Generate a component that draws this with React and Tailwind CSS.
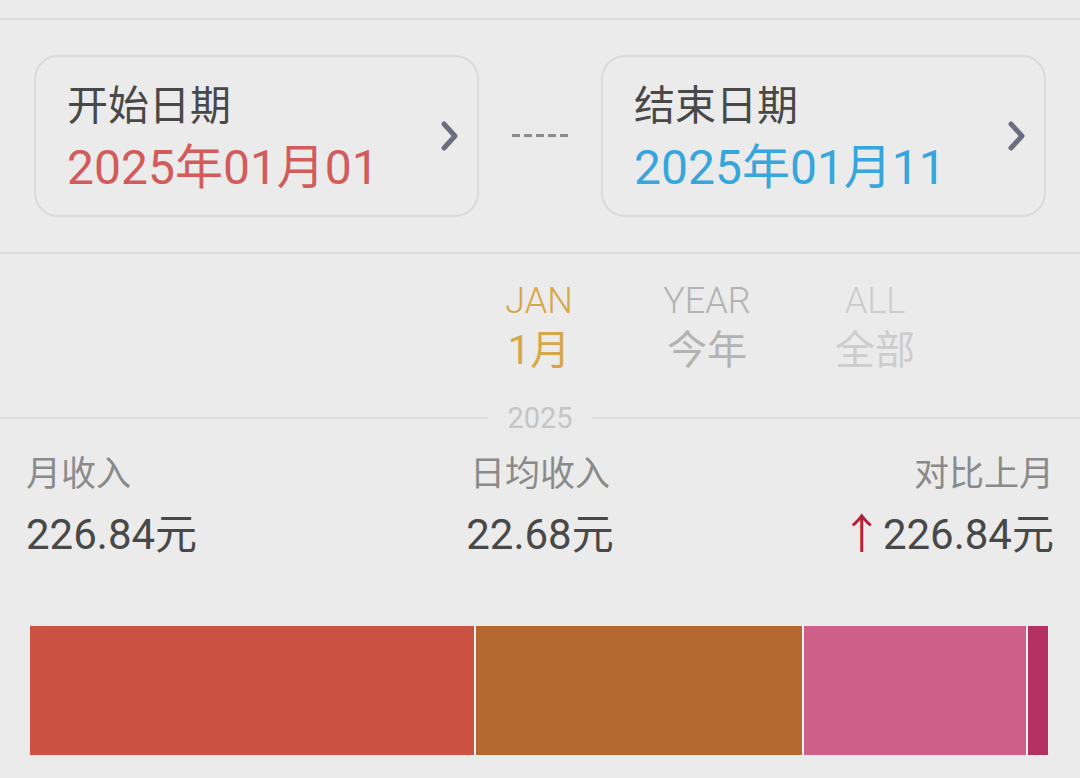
import React from 'react';

const font = { fontFamily: 'Roboto, "Noto Sans CJK SC", sans-serif' };

const Chevron = () => (
  <svg width="22" height="32" viewBox="0 0 22 32" fill="none">
    <path d="M5 4 L16 16 L5 28" stroke="#6a6e7e" strokeWidth="5" strokeLinecap="round" strokeLinejoin="round" />
  </svg>
);

const Dashes = () => (
  <svg width="56" height="4" viewBox="0 0 56 4">
    {[0, 1, 2, 3, 4].map((i) => (
      <rect key={i} x={i * 12} y="0" width="8" height="3" fill="#8c8c8c" />
    ))}
  </svg>
);

const DateCard = ({ label, value, valueClass }) => (
  <div className="w-[445px] h-[162px] rounded-[24px] border-2 border-[#dadada] flex items-center pl-[31px] pr-[16px]">
    <div className="flex-1 pt-[6px]">
      <div className="text-[41px] leading-[48px] text-[#484848]">{label}</div>
      <div className={`text-[48px] leading-[56px] mt-[10px] ${valueClass}`}>{value}</div>
    </div>
    <Chevron />
  </div>
);

const tabs = [
  { en: 'JAN', zh: '1月', en_c: 'text-[#d6a64a]', zh_c: 'text-[#d6a64a]' },
  { en: 'YEAR', zh: '今年', en_c: 'text-[#b3b3b3]', zh_c: 'text-[#b3b3b3]' },
  { en: 'ALL', zh: '全部', en_c: 'text-[#cdcdcd]', zh_c: 'text-[#cdcdcd]' },
];

const segments = [
  { w: 'w-[444px]', c: 'bg-[#cb5142]' },
  { w: 'w-[326px]', c: 'bg-[#b4672e]' },
  { w: 'w-[222px]', c: 'bg-[#cd5f88]' },
  { w: 'w-[20px]', c: 'bg-[#b42f62]' },
];

export default function App() {
  return (
    <div className="min-h-screen bg-[#ebebeb] overflow-hidden" style={font}>
      <div className="h-[18px]" />

      {/* date range */}
      <div className="border-y-2 border-[#dcdcdc] flex items-center pl-[34px] pr-[34px] pt-[35px] pb-[35px]">
        <DateCard label="开始日期" value="2025年01月01" valueClass="text-[#d25b5b]" />
        <div className="flex-1 flex justify-center">
          <Dashes />
        </div>
        <DateCard label="结束日期" value="2025年01月11" valueClass="text-[#36a6dd]" />
      </div>

      {/* period tabs */}
      <div className="flex pl-[455px] pt-[27px]">
        {tabs.map((t) => (
          <div key={t.en} className="w-[168px] flex flex-col items-center">
            <div className={`text-[36px] leading-[40px] font-light ${t.en_c}`}>{t.en}</div>
            <div className={`text-[40px] leading-[48px] mt-[6px] ${t.zh_c}`}>{t.zh}</div>
          </div>
        ))}
      </div>

      {/* year divider */}
      <div className="flex items-center mt-[26px]">
        <div className="flex-1 border-t-2 border-[#dedede]" />
        <div className="px-[19px] text-[29px] leading-[34px] text-[#c5c5c5]">2025</div>
        <div className="flex-1 border-t-2 border-[#dedede]" />
      </div>

      {/* summary */}
      <div className="grid grid-cols-3 px-[26px] mt-[20px]">
        <div>
          <div className="text-[35px] leading-[40px] text-[#8a8a8a]">月收入</div>
          <div className="text-[42px] leading-[48px] mt-[16px] text-[#484848]">226.84元</div>
        </div>
        <div className="text-center">
          <div className="text-[35px] leading-[40px] text-[#8a8a8a]">日均收入</div>
          <div className="text-[42px] leading-[48px] mt-[16px] text-[#484848]">22.68元</div>
        </div>
        <div className="text-right">
          <div className="text-[35px] leading-[40px] text-[#8a8a8a]">对比上月</div>
          <div className="text-[42px] leading-[48px] mt-[16px] text-[#484848]">
            <span className="text-[#b3203a]">↑</span>226.84元
          </div>
        </div>
      </div>

      {/* income breakdown bar */}
      <div className="flex gap-[2px] ml-[30px] mt-[67px] h-[129px] w-[1018px] bg-[#f3f3f3]">
        {segments.map((s, i) => (
          <div key={i} className={`${s.w} ${s.c} h-full`} />
        ))}
      </div>
    </div>
  );
}
